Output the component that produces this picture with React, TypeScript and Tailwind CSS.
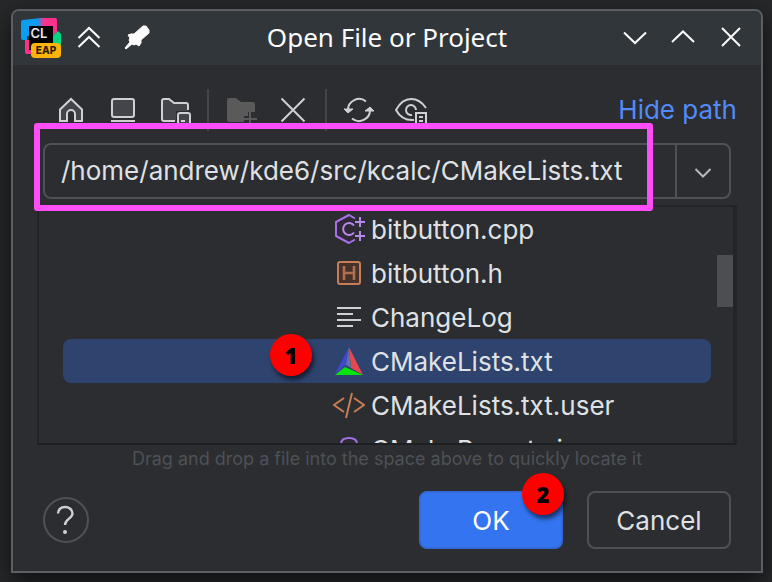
import type { ReactNode } from "react";

function Icon({ children, className = "" }: { children: ReactNode; className?: string }) {
  return (
    <svg viewBox="0 0 32 32" fill="none" className={`size-8 shrink-0 ${className}`} aria-hidden="true">
      {children}
    </svg>
  );
}

function IconButton({ label, children, disabled }: { label: string; children: ReactNode; disabled?: boolean }) {
  return (
    <button type="button" aria-label={label} disabled={disabled} className="size-8 shrink-0">
      <Icon>{children}</Icon>
    </button>
  );
}

function Separator() {
  return <div className="mx-4 h-full w-0.5 bg-[#43454a]" />;
}

function Step({ n, className }: { n: number; className: string }) {
  return (
    <span
      className={`absolute z-10 flex size-[42px] items-center justify-center rounded-full bg-[#ff0000] font-['Open_Sans',sans-serif] text-[22px] leading-6 font-extrabold text-black shadow-[2px_4px_4px_rgba(0,0,0,0.55)] ${className}`}
    >
      {n}
    </span>
  );
}

function Logo() {
  return (
    <svg viewBox="0 0 40 40" className="size-10 shrink-0" role="img" aria-label="CLion EAP">
      <defs>
        <linearGradient id="logo-top" x1="0" x2="1" y1="0" y2="0">
          <stop offset="0.45" stopColor="#0a9df0" />
          <stop offset="0.65" stopColor="#ff318c" />
        </linearGradient>
      </defs>
      <path d="M4 22h8v14H6a2 2 0 0 1-2-2z" fill="#ff318c" />
      <path d="M0 4a2 2 0 0 1 2-2L20 0h14a2 2 0 0 1 2 2v12l-4 4H6v4H2a2 2 0 0 1-2-2z" fill="url(#logo-top)" />
      <path d="M32 18l5-5 3 3v12h-8z" fill="#00d886" />
      <rect x="8" y="8" width="24" height="24" fill="#000" />
      <text x="9.500" y="19.500" fontSize="13" fontWeight="600" fill="#e8e8e8" fontFamily="Inter, sans-serif">CL</text>
      <rect x="10" y="25" width="30" height="15" rx="4" fill="#fcb40a" />
      <text x="25" y="36" fontSize="10" fontWeight="800" textAnchor="middle" fill="#2b1d00" fontFamily="Inter, sans-serif">EAP</text>
    </svg>
  );
}

const cppIcon = (
  <Icon>
    <path d="M22 5.500L16 2 3 9v14l13 7 6-3.500" fill="#2f2936" stroke="#a571e6" strokeWidth="2" strokeLinejoin="round" />
    <path d="M21 12.500a6 6 0 1 0 0 7M27 4v10M22 9h10M27 18v10M22 23h10" stroke="#b589ec" strokeWidth="2" />
  </Icon>
);
const headerIcon = (
  <Icon>
    <rect x="5" y="5" width="22" height="22" rx="2" fill="#45322b" stroke="#c77d55" strokeWidth="2" />
    <path d="M11 9v14M21 9v14M11 16h10" stroke="#b06f4e" strokeWidth="2.600" />
  </Icon>
);
const textIcon = (
  <Icon>
    <path d="M4 7h24M4 13h16M4 19h24M4 25h16" stroke="#ced0d6" strokeWidth="2" />
  </Icon>
);
const cmakeIcon = (
  <Icon>
    <path d="M16 2L2 29l12-10z" fill="#4048d0" />
    <path d="M16 2l14 28-12-7z" fill="#e5484d" />
    <path d="M16 2l2 21-5-3z" fill="#6470a0" />
    <path d="M2 30h28L12 22z" fill="#06e40c" />
  </Icon>
);
const markupIcon = (
  <Icon>
    <path d="M11 9L1 16l10 7M21 9l10 7-10 7M19 4l-6 25" stroke="#c77d55" strokeWidth="2" />
  </Icon>
);
const jsonIcon = (
  <Icon>
    <path d="M8 16v-5q0-6 8-6t8 6v12q0 4-5 4h-6q-5 0-5-4z" fill="#2f2936" stroke="#a571e6" strokeWidth="2" />
  </Icon>
);

const files = [
  { name: "bitbutton.cpp", icon: cppIcon },
  { name: "bitbutton.h", icon: headerIcon },
  { name: "ChangeLog", icon: textIcon },
  { name: "CMakeLists.txt", icon: cmakeIcon, selected: true },
  { name: "CMakeLists.txt.user", icon: markupIcon },
  { name: "CMakePresets.json", icon: jsonIcon },
];

function TitleBar() {
  return (
    <header className="grid h-[54px] grid-cols-[1fr_auto_1fr] items-center bg-[#31363b] px-2">
      <div className="flex items-center">
        <Logo />
        <div className="ml-3 flex gap-4">
          <IconButton label="Keep above">
            <path d="M5.500 16L16 6l10.500 10M5.500 25L16 15l10.500 10" stroke="#fcfcfc" strokeWidth="2" />
          </IconButton>
          <IconButton label="Pin">
            <path d="M22 4h3l3 4v3l-8 7v3l-2 3-3-2-2 1-2-1-6 5-1-1 5-6-1-2 1-2-2-3 3-1h3z" fill="#fcfcfc" stroke="#fcfcfc" strokeLinejoin="round" />
          </IconButton>
        </div>
      </div>
      <h1 className="pb-0.5 font-['Noto_Sans',sans-serif] text-[26px] leading-8 text-[#fcfcfc]">Open File or Project</h1>
      <div className="flex justify-end gap-4 pr-1.5">
        <IconButton label="Minimize">
          <path d="M5 10.500l11 10.500 11-10.500" stroke="#fcfcfc" strokeWidth="2" />
        </IconButton>
        <IconButton label="Maximize">
          <path d="M5 20l11-10.500L27 20" stroke="#fcfcfc" strokeWidth="2" />
        </IconButton>
        <IconButton label="Close">
          <path d="M7 6l18 18M25 6L7 24" stroke="#fcfcfc" strokeWidth="2" />
        </IconButton>
      </div>
    </header>
  );
}

function Toolbar() {
  return (
    <div className="mt-6 mb-3 flex h-[42px] items-center pl-[18px]">
      <div className="flex gap-5">
        <IconButton label="Home">
          <path d="M5 15.500L16 5l11 10.500V27h-7v-7a4 4 0 0 0-8 0v7H5z" fill="#43454a" stroke="#ced0d6" strokeWidth="2" />
        </IconButton>
        <IconButton label="Desktop">
          <rect x="5" y="5" width="22" height="18" rx="2" fill="#43454a" stroke="#ced0d6" strokeWidth="2" />
          <path d="M4 27h24" stroke="#ced0d6" strokeWidth="2" />
        </IconButton>
        <IconButton label="Project directory">
          <path d="M17 27H5a2 2 0 0 1-2-2V7a2 2 0 0 1 2-2h5l5 4h12a2 2 0 0 1 2 2v6H17z" fill="#43454a" />
          <path d="M16 27H5a2 2 0 0 1-2-2V7a2 2 0 0 1 2-2h5l5 4h12a2 2 0 0 1 2 2v5" stroke="#ced0d6" strokeWidth="2" />
          <rect x="19" y="19" width="12" height="12" rx="2" fill="#43454a" stroke="#ced0d6" strokeWidth="2" />
          <path d="M22 27h4" stroke="#ced0d6" strokeWidth="2" />
        </IconButton>
      </div>
      <Separator />
      <div className="flex gap-5">
        <IconButton label="New folder" disabled>
          <path d="M2 6a2 2 0 0 1 2-2h7l5 4h12a2 2 0 0 1 2 2v8h-7v4h-4v6H4a2 2 0 0 1-2-2z" fill="#5a5a5a" />
          <path d="M25 18v14M18 25h14" stroke="#5a5a5a" strokeWidth="2" />
        </IconButton>
        <IconButton label="Delete">
          <path d="M4.500 4.500l23 23M27.500 4.500l-23 23" stroke="#ced0d6" strokeWidth="2" />
        </IconButton>
      </div>
      <Separator />
      <div className="flex gap-5">
        <IconButton label="Refresh">
          <path d="M5 18v-2A11 11 0 0 1 23 7.500M27 14v2A11 11 0 0 1 9 24.500" stroke="#ced0d6" strokeWidth="2" />
          <path d="M1 15l4 4 5-4zM22 17l5-4 4 4z" fill="#ced0d6" stroke="#ced0d6" />
        </IconButton>
        <IconButton label="Show hidden files">
          <path d="M19 26Q7 27 1 16 7 5 16 5t15 9" stroke="#ced0d6" strokeWidth="2" />
          <path d="M17 21a5 5 0 1 1 4-5" stroke="#ced0d6" strokeWidth="2" />
          <path d="M21 19h10v12H21zM24 23h4M24 27h4" fill="#2b2d30" stroke="#ced0d6" strokeWidth="2" />
        </IconButton>
      </div>
      <a href="#path" className="ml-auto text-[26px] leading-8 text-[#548af7]">Hide path</a>
    </div>
  );
}

export default function App() {
  return (
    <main className="min-h-screen bg-[#26282a] py-[9px] pr-[9px] pl-[11px] font-['Inter',sans-serif] text-[#dfe1e5]">
      <section className="overflow-hidden rounded-t-lg border-2 border-[#5b5e62] bg-[#2b2d30] shadow-[0_8px_24px_rgba(0,0,0,0.65)]">
        <TitleBar />
        <div className="pr-6 pb-[22px] pl-6">
          <Toolbar />
          <div className="relative mr-1.5 ml-1.5 flex h-14 rounded-lg border-2 border-[#4e5157]">
            <input
              id="path"
              aria-label="Path"
              defaultValue="/home/andrew/kde6/src/kcalc/CMakeLists.txt"
              className="min-w-0 flex-1 bg-transparent pl-4 text-[26px] leading-8 outline-none"
            />
            <button type="button" aria-label="Recent paths" className="flex w-[54px] items-center justify-center border-l-2 border-[#4e5157]">
              <Icon>
                <path d="M8.500 14l7.500 7.500 7.500-7.500" stroke="#b4b8bf" strokeWidth="2" />
              </Icon>
            </button>
            <div className="pointer-events-none absolute -top-[22px] right-[76px] -left-[11px] z-10 h-[88px] rounded-[3px] border-6 border-[#ff4df8]" />
          </div>

          <div className="relative mt-1.5 h-[240px] overflow-hidden border-2 border-r-4 border-[#232427] border-b-[#1e1f22]">
            <ul role="listbox" aria-label="Files" className="mr-[22px] ml-6">
              {files.map((file) => (
                <li
                  key={file.name}
                  role="option"
                  aria-selected={!!file.selected}
                  className={`relative flex h-11 items-center gap-1.5 rounded-lg pl-[270px] text-[26px] leading-8 ${file.selected ? "bg-[#2e436e]" : ""}`}
                >
                  {file.icon}
                  <span className="pt-0.5">{file.name}</span>
                  {file.selected && <Step n={1} className="-top-[5px] left-[207px]" />}
                </li>
              ))}
            </ul>
            <div className="absolute top-12 right-0 h-[52px] w-4 bg-[#4d4e51]" />
          </div>

          <p className="pt-0.5 text-center text-[18px] leading-6 text-[#4e5157]">
            Drag and drop a file into the space above to quickly locate it
          </p>

          <footer className="mt-5 flex items-center gap-6 px-1.5 text-[26px] leading-8">
            <button type="button" aria-label="Help" className="mr-auto flex size-[46px] items-center justify-center rounded-full border-2 border-[#4e5157]">
              <Icon>
                <path d="M8 9.500C8 5.500 11 3 15 3s7.500 2.500 7.500 6.500c0 5-7.500 5.500-7.500 11.500" stroke="#ced0d6" strokeWidth="2.400" />
                <circle cx="15" cy="28" r="2" fill="#ced0d6" />
              </Icon>
            </button>
            <div className="relative">
              <button type="button" className="h-[58px] w-36 rounded-lg border-2 border-[#3369d6] bg-[#3574f0] pt-0.5 text-white">OK</button>
              <Step n={2} className="-top-[18px] -right-px" />
            </div>
            <button type="button" className="h-[58px] w-36 rounded-lg border-2 border-[#4e5157] pt-0.5">Cancel</button>
          </footer>
        </div>
      </section>
    </main>
  );
}
